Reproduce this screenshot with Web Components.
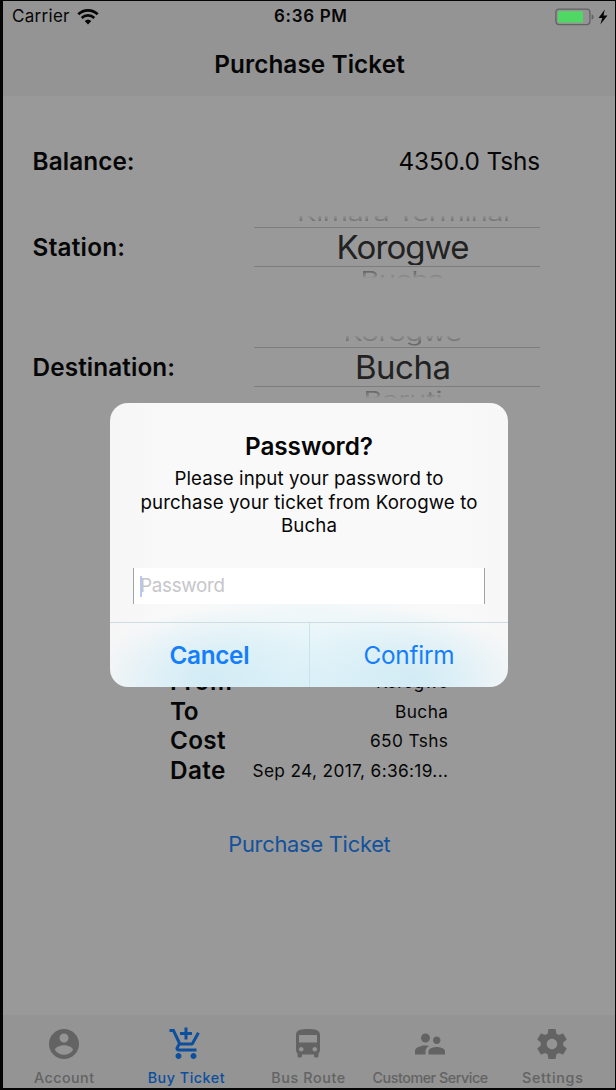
<!DOCTYPE html>
<html lang="en">
<head>
<meta charset="utf-8">
<title>Purchase Ticket</title>
<style>
html,body{margin:0;background:#050505;overflow:hidden}
body{width:616px;height:1090px;font-family:Inter,"Liberation Sans",sans-serif}
</style>
</head>
<body>
<ticket-app></ticket-app>
<script>
const define = (name, html, setup) => customElements.define(name, class extends HTMLElement {
  connectedCallback() {
    if (this.shadowRoot) return;
    const root = this.attachShadow({mode: 'open'});
    const t = document.createElement('template');
    t.innerHTML = html;
    root.append(t.content.cloneNode(true));
    if (setup) setup(this, root);
  }
});

// Single-line label: size, weight and tracked width come from attributes.
define('ui-text', `
<style>:host{display:block;white-space:nowrap;flex:none}span{display:inline-block}</style>
<span><slot></slot></span>`, (el, root) => {
  const s = root.querySelector('span');
  el.style.fontSize = el.getAttribute('size') + 'px';
  el.style.fontWeight = el.getAttribute('weight') || 400;
  const w = parseFloat(el.getAttribute('w'));
  if (w) {
    const n = el.textContent.length;
    const ls = (w - s.getBoundingClientRect().width) / (n - 1);
    s.style.letterSpacing = ls + 'px';
    s.style.marginRight = -ls + 'px';
  }
});

define('status-bar', `
<style>
:host{display:grid;grid-template-columns:1fr auto 1fr;align-items:center;height:31px;padding:0 7px 0 9px;line-height:31px}
.l,.r{display:flex;align-items:center}.l{gap:7px}.r{justify-content:flex-end;gap:4px}
.m{padding-left:1px}
svg{display:block}
</style>
<div class="l"><ui-text size="17" w="57.5">Carrier</ui-text>
<svg width="22" height="16" viewBox="0 0 22 16" fill="none" stroke="#070707" stroke-width="2.7"><path d="M1.3 5.3A14 14 0 0 1 20.7 5.3"/><path d="M4.7 8.9A9.2 9.2 0 0 1 17.3 8.9"/><path d="M11 15.4 7.7 12A4.8 4.8 0 0 1 14.3 12Z" fill="#070707" stroke="none"/></svg></div>
<ui-text class="m" size="17" weight="600" w="73">6:36 PM</ui-text>
<div class="r"><svg width="39" height="18" viewBox="0 0 39 18"><rect x=".9" y="1.2" width="34" height="15.4" rx="3" fill="none" stroke="#626262" stroke-width="1.3"/><rect x="3" y="3.2" width="25" height="11.4" rx="1" fill="#4fd964"/><path d="M36.6 6.2q2 .6 2 2.8t-2 2.8Z" fill="#626262"/></svg>
<svg width="10" height="16" viewBox="0 0 10 16"><path d="M6.8.5.5 9h3.8L2.3 15.5 9.5 6.4H5.5Z" fill="#070707"/></svg></div>`);

define('nav-header', `
<style>:host{display:flex;justify-content:center;height:64px;line-height:64px;padding-left:1px}</style>
<slot></slot>`);

define('form-row', `
<style>:host{display:flex;justify-content:space-between;align-items:center;padding:0 75px 0 29.6px}</style>
<slot name="label"></slot><slot></slot>`);

define('wheel-picker', `
<style>
:host{display:grid;grid-template-rows:11px 40px 11px;width:286px;height:62px}
div{display:flex;justify-content:center;overflow:hidden;min-height:0}
.p,.n{line-height:40px;color:#5c5c5c}
.p{-webkit-mask:linear-gradient(#0002,#000c 60%);mask:linear-gradient(#0002,#000c 60%)}
.n{-webkit-mask:linear-gradient(#000c 40%,#0001);mask:linear-gradient(#000c 40%,#0001)}
.p slot,.n slot{display:block;height:40px}
.p slot{margin-top:-24.6px;transform:scaleY(.7);transform-origin:50% 30.6px}
.n slot{margin-top:-5px;transform:scaleY(.7);transform-origin:50% 9.5px}
.c{box-sizing:border-box;border:solid #7d7d7d;border-width:1px 0;line-height:38px;color:#222;padding-left:12px}
.c slot{display:block;height:36.5px;overflow:hidden}
</style>
<div class="p"><slot name="prev"></slot></div><div class="c"><slot name="current"></slot></div><div class="n"><slot name="next"></slot></div>`);

define('receipt-row', `
<style>:host{display:flex;justify-content:space-between;height:29.6px;line-height:29.6px}</style>
<slot name="k"></slot><slot></slot>`);

define('tab-item', `
<style>
:host{display:flex;flex-direction:column;align-items:center;color:#636363;padding-top:10.5px;line-height:20px}
:host([active]){color:#0b4f9e}
svg{display:block;width:36px;height:36px;fill:currentColor;margin-bottom:6.5px}
</style>
<svg viewBox="0 0 24 24"><path/></svg><slot></slot>`, (el, root) => {
  root.querySelector('path').setAttribute('d', ({
    account: 'M12 2C6.48 2 2 6.48 2 12s4.48 10 10 10 10-4.48 10-10S17.52 2 12 2zm0 3c1.66 0 3 1.34 3 3s-1.34 3-3 3-3-1.34-3-3 1.34-3 3-3zm0 14.2c-2.5 0-4.71-1.28-6-3.22.03-1.99 4-3.08 6-3.08 1.99 0 5.97 1.09 6 3.08-1.29 1.94-3.5 3.22-6 3.22z',
    cart: 'M11 9h2V6h3V4h-3V1h-2v3H8v2h3v3zm-4 9c-1.1 0-1.99.9-1.99 2S5.9 22 7 22s2-.9 2-2-.9-2-2-2zm10 0c-1.1 0-1.99.9-1.99 2s.89 2 1.99 2 2-.9 2-2-.9-2-2-2zm-9.83-3.25l.03-.12.9-1.63h7.45c.75 0 1.41-.41 1.75-1.03l3.86-7.01L19.42 4h-.01l-1.1 2-2.76 5H8.53l-.13-.27L6.16 6l-.95-2-.94-2H1v2h2l3.6 7.59-1.35 2.45c-.16.28-.25.61-.25.96 0 1.1.9 2 2 2h12v-2H7.42c-.13 0-.25-.11-.25-.25z',
    bus: 'M4 16c0 .88.39 1.67 1 2.22V20c0 .55.45 1 1 1h1c.55 0 1-.45 1-1v-1h8v1c0 .55.45 1 1 1h1c.55 0 1-.45 1-1v-1.78c.61-.55 1-1.34 1-2.22V6c0-3.5-3.58-4-8-4s-8 .5-8 4v10zm3.5 1c-.83 0-1.5-.67-1.5-1.5S6.67 14 7.5 14s1.5.67 1.5 1.5S8.33 17 7.5 17zm9 0c-.83 0-1.5-.67-1.5-1.5s.67-1.5 1.5-1.5 1.5.67 1.5 1.5-.67 1.5-1.5 1.5zm1.5-6H6V6h12v5z',
    people: 'M16.5 12c1.38 0 2.49-1.12 2.49-2.5S17.88 7 16.5 7C15.12 7 14 8.12 14 9.5s1.12 2.5 2.5 2.5zM9 11c1.66 0 2.99-1.34 2.99-3S10.66 5 9 5C7.34 5 6 6.34 6 8s1.34 3 3 3zm7.5 3c-1.83 0-5.5.92-5.5 2.75V19h11v-2.25c0-1.83-3.67-2.75-5.5-2.75zM9 13c-2.33 0-7 1.17-7 3.5V19h7v-2.25c0-.85.33-2.34 2.37-3.47C10.5 13.1 9.66 13 9 13z',
    gear: 'M19.43 12.98c.04-.32.07-.64.07-.98s-.03-.66-.07-.98l2.11-1.65c.19-.15.24-.42.12-.64l-2-3.46c-.12-.22-.39-.3-.61-.22l-2.49 1c-.52-.4-1.08-.73-1.69-.98l-.38-2.65C14.46 2.18 14.25 2 14 2h-4c-.25 0-.46.18-.49.42l-.38 2.65c-.61.25-1.17.59-1.69.98l-2.49-1c-.23-.09-.49 0-.61.22l-2 3.46c-.13.22-.07.49.12.64l2.11 1.65c-.04.32-.07.65-.07.98s.03.66.07.98l-2.11 1.65c-.19.15-.24.42-.12.64l2 3.46c.12.22.39.3.61.22l2.49-1c.52.4 1.08.73 1.69.98l.38 2.65c.03.24.24.42.49.42h4c.25 0 .46-.18.49-.42l.38-2.65c.61-.25 1.17-.59 1.69-.98l2.49 1c.23.09.49 0 .61-.22l2-3.46c.12-.22.07-.49-.12-.64l-2.11-1.65zM12 15.5c-1.93 0-3.5-1.57-3.5-3.5s1.57-3.5 3.5-3.5 3.5 1.57 3.5 3.5-1.57 3.5-3.5 3.5z'
  })[el.getAttribute('icon')]);
});

define('tab-bar', `
<style>:host{display:grid;grid-template-columns:repeat(5,1fr);height:73px;background:#949494;overflow:hidden;padding-right:1.5px}</style>
<slot></slot>`);

define('password-dialog', `
<style>
:host{display:block;width:398px;height:284px;border-radius:18px;overflow:hidden;
background:radial-gradient(ellipse 120px 70px at 100px 276px,#d2ebf5 0,#d2ebf500 100%),radial-gradient(ellipse 120px 70px at 300px 276px,#d2ebf5 0,#d2ebf500 100%),radial-gradient(ellipse 195px 105px at 199px 290px,#dcf2f8 0,#e6f5f9 50%,#f0f8fa00 100%),linear-gradient(90deg,#f6f6f6,#f9f9f9 14%,#f9f9f9 86%,#f7f7f7)}
.t{display:flex;flex-direction:column;align-items:center;height:165px;box-sizing:border-box;padding-top:28px}
.t ui-text{line-height:23.6px}.t .h{line-height:31px;margin-bottom:5px}
.f{display:flex;align-items:center;box-sizing:border-box;margin:0 23px 18px;width:352px;height:36px;border:solid #9da5a7;border-width:0 1px;background:#fff;color:#c6c6ca;line-height:36px;padding-left:4.5px}
i{display:block;width:2px;height:21px;background:#b9c8fb;margin:0 -1.5px 0 1px}
.b{display:grid;grid-template-columns:1fr 1fr;border-top:1px solid #cddde2;height:64px;color:#147efb;line-height:65px}
.b div{display:flex;justify-content:center}.b div+div{border-left:1px solid #c5e4ee}
</style>
<div class="t"><ui-text class="h" size="24.3" weight="600" w="128">Password?</ui-text>
<ui-text size="18.7" w="269">Please input your password to</ui-text><ui-text size="18.7" w="337">purchase your ticket from Korogwe to</ui-text><ui-text size="18.7" w="56">Bucha</ui-text></div>
<div class="f"><i></i><ui-text size="18.8" w="85">Password</ui-text></div>
<div class="b"><div><ui-text size="24.3" weight="600" w="80">Cancel</ui-text></div><div><ui-text size="24.3" w="91">Confirm</ui-text></div></div>`);

define('ticket-app', `
<style>
:host{display:flex;flex-direction:column;position:relative;box-sizing:border-box;width:612px;height:1087px;margin:1px 1px 2px 3px;background:#999;color:#060606}
header{background:#949494;height:95px;flex:none}
main{flex:1;min-height:0;display:flex;flex-direction:column}
.bal{height:31px;margin-top:49.5px}.st{height:62px;margin-top:39.5px}.de{height:62px;margin-top:58px}
.rec{margin:269px 167px 0 167px}
.link{color:#12519c;align-self:center;line-height:30px;margin-top:44px;padding-left:1px}
password-dialog{position:absolute;left:107px;top:402px}
</style>
<header><status-bar></status-bar><nav-header><ui-text size="24.3" weight="600" w="190.5">Purchase Ticket</ui-text></nav-header></header>
<main>
<form-row class="bal"><ui-text slot="label" size="24.3" weight="600" w="102">Balance:</ui-text><ui-text size="24.3" w="141.5">4350.0 Tshs</ui-text></form-row>
<form-row class="st"><ui-text slot="label" size="24.3" weight="600" w="92.5">Station:</ui-text>
<wheel-picker><ui-text slot="prev" size="29" w="213" style="padding-left:13px">Kimara Terminal</ui-text><ui-text slot="current" size="33" w="133">Korogwe</ui-text><ui-text slot="next" size="29" w="84" style="padding-left:11px">Bucha</ui-text></wheel-picker></form-row>
<form-row class="de"><ui-text slot="label" size="24.3" weight="600" w="142.5">Destination:</ui-text>
<wheel-picker><ui-text slot="prev" size="29" w="119" style="padding-left:12px">Korogwe</ui-text><ui-text slot="current" size="33" w="96">Bucha</ui-text><ui-text slot="next" size="29" w="79" style="padding-left:12px">Baruti</ui-text></wheel-picker></form-row>
<div class="rec">
<receipt-row><ui-text slot="k" size="24.3" weight="600" w="62">From</ui-text><ui-text size="17.3" w="72">Korogwe</ui-text></receipt-row>
<receipt-row><ui-text slot="k" size="24.3" weight="600" w="28.5">To</ui-text><ui-text size="17.3" w="53">Bucha</ui-text></receipt-row>
<receipt-row><ui-text slot="k" size="24.3" weight="600" w="55.5">Cost</ui-text><ui-text size="17.3" w="78">650 Tshs</ui-text></receipt-row>
<receipt-row><ui-text slot="k" size="24.3" weight="600" w="55.5">Date</ui-text><ui-text size="17.3" w="195.5">Sep 24, 2017, 6:36:19...</ui-text></receipt-row>
</div>
<ui-text class="link" size="21.8" w="162.5">Purchase Ticket</ui-text>
</main>
<tab-bar>
<tab-item icon="account"><ui-text size="14.3" weight="500" w="60">Account</ui-text></tab-item>
<tab-item icon="cart" active><ui-text size="14.3" weight="500" w="77">Buy Ticket</ui-text></tab-item>
<tab-item icon="bus"><ui-text size="14.3" weight="500" w="74">Bus Route</ui-text></tab-item>
<tab-item icon="people"><ui-text size="14.3" weight="500" w="115.5">Customer Service</ui-text></tab-item>
<tab-item icon="gear"><ui-text size="14.3" weight="500" w="61">Settings</ui-text></tab-item>
</tab-bar>
<password-dialog></password-dialog>`);
</script>
</body>
</html>
